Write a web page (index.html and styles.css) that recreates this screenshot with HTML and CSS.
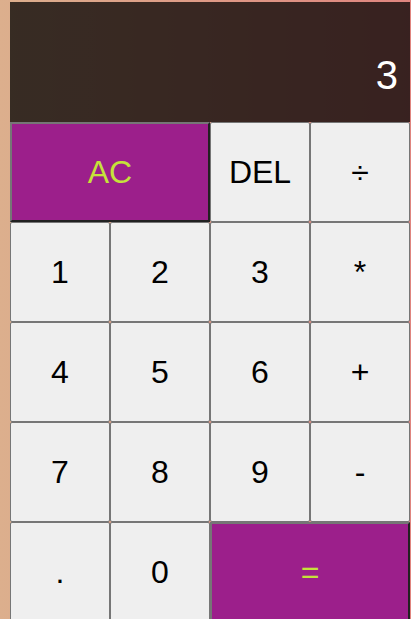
FILE: index.html
```html
<!DOCTYPE html>
<html lang="en">
<head>
<meta charset="utf-8">
<title>Calculator</title>
<link rel="stylesheet" href="styles.css">
</head>
<body>
<div class="calculator">
  <div class="output">
    <div class="previous"></div>
    <div class="current">3</div>
  </div>
  <button class="key accent span-two">AC</button>
  <button class="key">DEL</button>
  <button class="key">÷</button>
  <button class="key">1</button>
  <button class="key">2</button>
  <button class="key">3</button>
  <button class="key">*</button>
  <button class="key">4</button>
  <button class="key">5</button>
  <button class="key">6</button>
  <button class="key">+</button>
  <button class="key">7</button>
  <button class="key">8</button>
  <button class="key">9</button>
  <button class="key">-</button>
  <button class="key">.</button>
  <button class="key">0</button>
  <button class="key accent span-two">=</button>
</div>
</body>
</html>
```
FILE: styles.css
```css
html {
  overflow: hidden;
}

body {
  margin: 0;
  padding: 2px 0 0 10px;
  min-height: 100vh;
  box-sizing: border-box;
  background: linear-gradient(to right, #dcaf8d, #e0857f);
  font-family: "Liberation Sans", Arial, sans-serif;
}

.calculator {
  display: grid;
  grid-template-columns: repeat(4, 100px);
  grid-template-rows: 120px repeat(5, 100px);
}

.output {
  grid-column: 1 / -1;
  background: rgba(0, 0, 0, 0.75);
  display: flex;
  flex-direction: column;
  align-items: flex-end;
  justify-content: flex-end;
  padding: 10px 12px 27px 10px;
  box-sizing: border-box;
  word-break: break-all;
}

.previous {
  color: rgba(255, 255, 255, 0.75);
  font-size: 24px;
}

.current {
  color: #fff;
  font-size: 40px;
  line-height: 1;
}

.key {
  margin: 0;
  padding: 0;
  font-family: "Liberation Sans", Arial, sans-serif;
  font-size: 32px;
  color: #000;
  background: #efefef;
  border: 1px solid #767676;
  border-radius: 2px;
  cursor: pointer;
}

.accent {
  background: #9c1f8b;
  color: #c6e23a;
  border: 2px outset #767676;
  border-radius: 0;
}

.span-two {
  grid-column: span 2;
}
```
